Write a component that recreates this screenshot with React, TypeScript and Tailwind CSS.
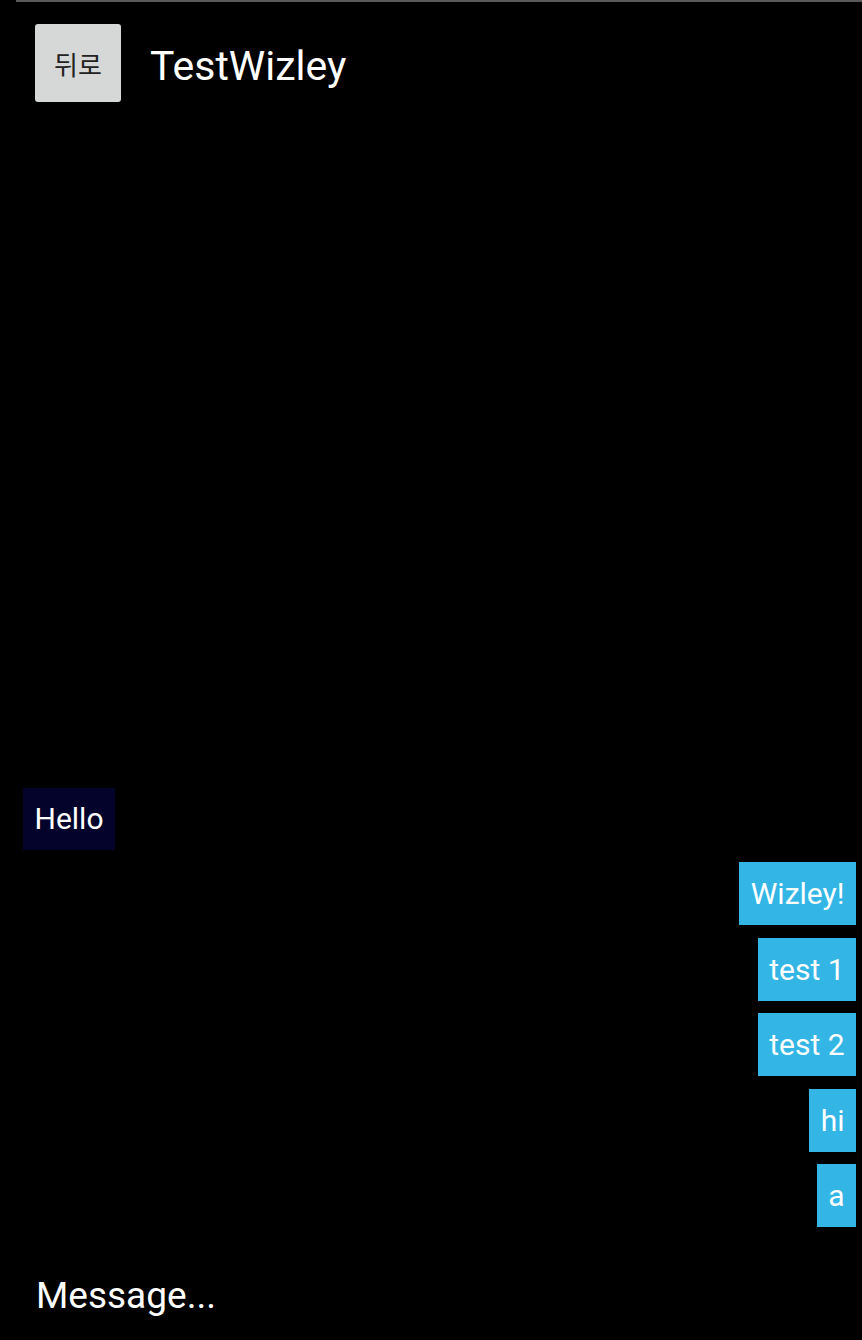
const messages = [
    { text: "Hello", mine: false },
    { text: "Wizley!", mine: true },
    { text: "test 1", mine: true },
    { text: "test 2", mine: true },
    { text: "hi", mine: true },
    { text: "a", mine: true },
]

const Bubble = ({ text, mine }: { text: string; mine: boolean }) => (
    <div className={mine ? "flex justify-end pr-[6px]" : "flex justify-start pl-[23px]"}>
        <div
            className={
                mine
                    ? "h-[63px] flex items-center px-[11.5px] bg-[#33b5e5] text-white text-[30px]"
                    : "h-[62px] flex items-center px-[11.5px] bg-[#03032b] text-white text-[30px]"
            }
        >
            {text}
        </div>
    </div>
)

export default function App() {
    return (
        <div
            className="h-[1340px] w-[862px] bg-black flex flex-col overflow-hidden"
            style={{ fontFamily: "Roboto, 'Noto Sans CJK KR', sans-serif" }}
        >
            <div className="ml-[16px] h-[2px] bg-[#5a5a5a]" />
            <div className="flex items-center pt-[22px] pl-[35px]">
                <button className="w-[86px] h-[78px] rounded-[3px] bg-[#d6d7d7] text-[#222] text-[26px] flex items-center justify-center font-['Noto_Sans_CJK_KR',sans-serif]">
                    뒤로
                </button>
                <h1 className="ml-[29px] mt-[6px] text-[41px] text-white leading-none">TestWizley</h1>
            </div>
            <div className="flex-1 flex flex-col justify-end gap-[12.5px]">
                {messages.map((m, i) => (
                    <Bubble key={i} text={m.text} mine={m.mine} />
                ))}
            </div>
            <div className="h-[113px] flex items-center pt-[24px] pl-[36px]">
                <input
                    className="bg-transparent outline-none text-white text-[37px] placeholder:text-white w-full"
                    placeholder="Message..."
                />
            </div>
        </div>
    )
}
